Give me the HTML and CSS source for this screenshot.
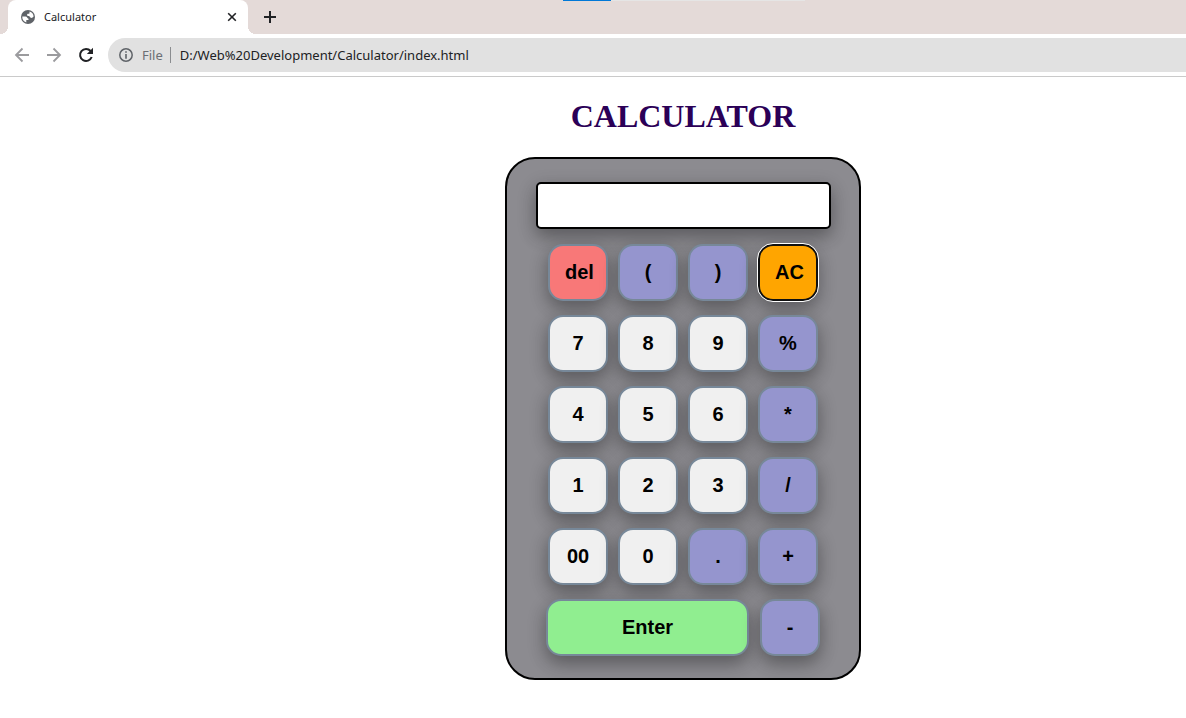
FILE: index.html
```html
<!DOCTYPE html>
<html lang="en">
<head>
<meta charset="utf-8">
<title>Calculator</title>
<link rel="stylesheet" href="styles.css">
</head>
<body>
<header class="browser">
  <div class="tabstrip">
    <div class="drag-bar"></div>
    <div class="tab">
      <svg class="globe" width="14" height="14" viewBox="0 0 14 14" aria-hidden="true">
        <circle cx="7" cy="7" r="7" fill="#5f6368"/>
        <path d="M1.300 6.500h3.200c1.800 0 1.500 1.900 3 2.200v1.300H5.300v2.400C2.600 11.600 1 9.200 1.300 6.500zM8.600 1.600c2.300.6 3.900 2.600 4 5-1 1.400-2.400 1.700-3.300.9-.3-1.200-.9-1.500-2.500-1.600-1-.4-1-1.700 0-2.100h1.400c.5-.8.200-1.400.4-2.200z" fill="#fff"/>
      </svg>
      <span class="tab-title">Calculator</span>
      <button class="icon-button" type="button" aria-label="Close tab">
        <svg width="10" height="10" viewBox="0 0 10 10"><path d="M1.200 1.200l7.600 7.600M8.800 1.200l-7.600 7.600" stroke="#202124" stroke-width="1.600"/></svg>
      </button>
    </div>
    <button class="icon-button new-tab" type="button" aria-label="New tab">
      <svg width="12" height="12" viewBox="0 0 12 12"><path d="M6 0v12M0 6h12" stroke="#202124" stroke-width="2"/></svg>
    </button>
  </div>
  <div class="toolbar">
    <nav class="nav-buttons">
      <button class="icon-button" type="button" aria-label="Back">
        <svg width="16" height="16" viewBox="0 0 16 16"><path d="M15 8H2M8.500 1.500L2 8l6.500 6.500" fill="none" stroke="#9b9b9e" stroke-width="1.800"/></svg>
      </button>
      <button class="icon-button" type="button" aria-label="Forward">
        <svg width="16" height="16" viewBox="0 0 16 16"><path d="M1 8h13M7.500 1.500L14 8l-6.500 6.500" fill="none" stroke="#9b9b9e" stroke-width="1.800"/></svg>
      </button>
      <button class="icon-button" type="button" aria-label="Reload">
        <svg width="16" height="16" viewBox="0 0 16 16"><path d="M12.600 4A6 6 0 1 0 13.700 10" fill="none" stroke="#202124" stroke-width="2"/><path d="M15 .8v6.200H8.800z" fill="#202124"/></svg>
      </button>
    </nav>
    <div class="address-bar">
      <svg width="14" height="14" viewBox="0 0 14 14" aria-hidden="true"><circle cx="7" cy="7" r="6.200" fill="none" stroke="#5f6368" stroke-width="1.500"/><path d="M7 3.200v1.600M7 6v4.800" stroke="#5f6368" stroke-width="1.600"/></svg>
      <span class="scheme">File</span>
      <input class="url" type="text" aria-label="Address" value="D:/Web%20Development/Calculator/index.html">
    </div>
  </div>
</header>
<main class="page">
  <h1 class="title">CALCULATOR</h1>
  <form class="calculator">
    <input class="display" type="text" aria-label="Display">
    <div class="keys">
      <div class="row"><button class="key delete" type="button">del</button><button class="key operator" type="button">(</button><button class="key operator" type="button">)</button><button class="key clear" type="button">AC</button></div>
      <div class="row"><button class="key" type="button">7</button><button class="key" type="button">8</button><button class="key" type="button">9</button><button class="key operator" type="button">%</button></div>
      <div class="row"><button class="key" type="button">4</button><button class="key" type="button">5</button><button class="key" type="button">6</button><button class="key operator" type="button">*</button></div>
      <div class="row"><button class="key" type="button">1</button><button class="key" type="button">2</button><button class="key" type="button">3</button><button class="key operator" type="button">/</button></div>
      <div class="row"><button class="key" type="button">00</button><button class="key" type="button">0</button><button class="key operator" type="button">.</button><button class="key operator" type="button">+</button></div>
      <div class="row"><button class="key enter" type="button">Enter</button><button class="key operator" type="button">-</button></div>
    </div>
  </form>
</main>
</body>
</html>
```

FILE: styles.css
```css
* {
  box-sizing: border-box;
}

body {
  margin: 0;
  background: #fff;
  font-family: "Liberation Sans", Arial, sans-serif;
}

.browser {
  font-family: "Noto Sans", "Open Sans", sans-serif;
  border-bottom: 1px solid #cacaca;
}

.tabstrip {
  position: relative;
  display: flex;
  height: 34px;
  padding-left: 8px;
  background: #e4dad8;
}

/* Thin window-share strip lying over the top edge of the tab bar */
.drag-bar {
  position: absolute;
  top: 0;
  left: 563px;
  width: 242px;
  height: 1px;
  background: linear-gradient(to right, #0078d7 48px, #e5e5e5 48px);
}

.tab {
  position: relative;
  display: flex;
  align-items: center;
  width: 240px;
  padding: 0 11px 0 13px;
  border-radius: 8px 8px 0 0;
  background: #fff;
}

.tab::before,
.tab::after {
  content: "";
  position: absolute;
  bottom: 0;
  width: 8px;
  height: 8px;
}

.tab::before {
  right: 100%;
  background: radial-gradient(circle at 0 0, transparent 8px, #fff 8px);
}

.tab::after {
  left: 100%;
  background: radial-gradient(circle at 100% 0, transparent 8px, #fff 8px);
}

.tab-title {
  flex: 1;
  margin-left: 9px;
  padding-bottom: 1px;
  font-size: 11px;
  color: #202124;
}

.icon-button {
  display: flex;
  padding: 0;
  border: 0;
  background: none;
}

.new-tab {
  align-self: center;
  margin-left: 16px;
}

.toolbar {
  display: flex;
  align-items: center;
  height: 42px;
  padding-left: 14px;
}

.nav-buttons {
  display: flex;
  gap: 16px;
  margin-right: 14px;
}

.address-bar {
  display: flex;
  flex: 1;
  align-items: center;
  height: 34px;
  padding-left: 11px;
  border-radius: 17px 0 0 17px;
  background: #e1e1e1;
  font-size: 13px;
}

.scheme {
  margin-left: 9px;
  padding-right: 7px;
  border-right: 1px solid #8b8d90;
  line-height: 16px;
  color: #6b6f74;
}

.url {
  flex: 1;
  min-width: 0;
  padding: 0 0 0 9px;
  border: 0;
  background: none;
  font: inherit;
  color: #202124;
}

.page {
  display: flex;
  flex-direction: column;
  align-items: center;
  padding-left: 180px;
}

.title {
  margin: 21px 0 22px;
  font: bold 32px/37px "Liberation Serif", "Times New Roman", serif;
  color: #2b0057;
}

.calculator {
  padding: 23px 28px 22px 29px;
  border: 2px solid #000;
  border-radius: 30px;
  background: #8c8b90;
}

.display {
  display: block;
  width: 295px;
  height: 47px;
  margin-bottom: 15px;
  padding: 0 8px;
  border: 2px solid #000;
  border-radius: 5px;
  background: #fff;
  font-size: 20px;
  box-shadow: 0 8px 16px 0 rgba(0, 0, 0, 0.2), 0 6px 20px 0 rgba(0, 0, 0, 0.19);
}

.keys {
  display: grid;
  gap: 14px;
  padding-right: 1px;
}

.row {
  display: flex;
  justify-content: center;
  gap: 10px;
}

.key {
  width: 60px;
  height: 57px;
  padding: 0 15px;
  border: 2px solid #778899;
  border-radius: 15px;
  background: #f0f0f0;
  font: bold 20px "Liberation Sans", Arial, sans-serif;
  color: #000;
  box-shadow: 0 8px 16px 0 rgba(0, 0, 0, 0.2), 0 6px 20px 0 rgba(0, 0, 0, 0.19);
}

.operator {
  background: #9595ce;
}

.delete {
  background: #f87878;
}

.clear {
  border-color: #101010;
  outline: 1px solid #fff;
  background: #ffa500;
}

.enter {
  width: 203px;
  margin-right: 1px;
  background: #90ee90;
}
```
